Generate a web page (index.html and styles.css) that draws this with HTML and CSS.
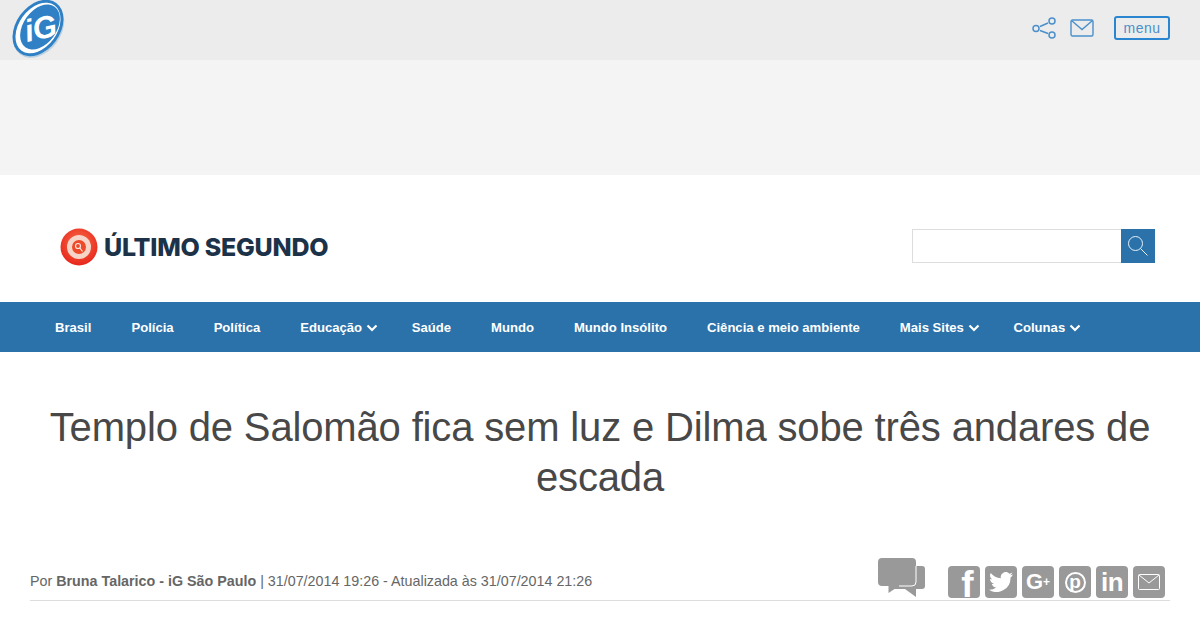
FILE: index.html
```html
<!DOCTYPE html>
<html lang="pt-BR">
<head>
  <meta charset="UTF-8">
  <title>Templo de Salomão fica sem luz e Dilma sobe três andares de escada</title>
  <link rel="stylesheet" href="styles.css">
</head>
<body>

  <div class="topbar">
    <svg class="ig-logo" width="60" height="60" viewBox="0 0 60 60">
      <ellipse cx="28.500" cy="29.500" rx="22.500" ry="31" transform="rotate(36 28.500 29.500)" fill="#bcd0e0"/>
      <ellipse cx="28" cy="28" rx="22" ry="31" transform="rotate(36 28 28)" fill="#2f80c4"/>
      <ellipse cx="28" cy="28" rx="19" ry="28" transform="rotate(36 28 28)" fill="#fff"/>
      <ellipse cx="30" cy="27" rx="16.500" ry="25" transform="rotate(36 30 27)" fill="#2f80c4"/>
      <text class="ig-text" x="17" y="42" transform="rotate(-12 17 42)">iG</text>
    </svg>
    <div class="top-actions">
      <svg width="24" height="22" viewBox="0 0 24 22" fill="none" stroke="#4b90cb" stroke-width="1.500">
        <circle cx="4" cy="11.500" r="3"/>
        <circle cx="20" cy="4" r="3"/>
        <circle cx="20" cy="18" r="3"/>
        <path d="M8 9.500l8-3.500M8 13.500l8 3"/>
      </svg>
      <svg class="top-mail" width="24" height="18" viewBox="0 0 24 18" fill="none" stroke="#4b90cb" stroke-width="1.400">
        <rect x="1" y="1" width="22" height="16" rx="1.500"/>
        <path d="M1.500 1.500L12 10.500 22.500 1.500"/>
      </svg>
      <span class="menu-btn">menu</span>
    </div>
  </div>

  <div class="ad-band"></div>

  <header class="site-header">
    <div class="brand">
      <svg width="38" height="38" viewBox="0 0 38 38">
        <defs>
          <radialGradient id="brandRed" cx="50%" cy="40%" r="60%">
            <stop offset="0" stop-color="#f9714a"/>
            <stop offset="1" stop-color="#e8261c"/>
          </radialGradient>
        </defs>
        <circle cx="19" cy="19" r="18.500" fill="url(#brandRed)"/>
        <circle cx="19" cy="19" r="12" fill="#f6d5c8"/>
        <circle cx="19" cy="19" r="7" fill="#ee4a2a"/>
        <circle cx="18" cy="18" r="2.500" fill="none" stroke="#fbe3dc" stroke-width="1.200"/>
        <path d="M19.500 19.500l3 4" stroke="#fbe3dc" stroke-width="1.200"/>
      </svg>
      <span class="brand-name">ÚLTIMO SEGUNDO</span>
    </div>
    <form class="search">
      <input class="search-input" type="text">
      <span class="search-btn">
        <svg width="22" height="22" viewBox="0 0 22 22" fill="none" stroke="#e6f0f7" stroke-width="1">
          <circle cx="8.500" cy="8.500" r="7"/>
          <path d="M13.500 13.500l7 7"/>
        </svg>
      </span>
    </form>
  </header>

  <nav class="main-nav">
    <a>Brasil</a>
    <a>Polícia</a>
    <a>Política</a>
    <a class="has-sub">Educação <svg class="chev" width="12" height="8" viewBox="0 0 12 8"><path d="M1.500 1.500L6 6l4.500-4.500"/></svg></a>
    <a>Saúde</a>
    <a>Mundo</a>
    <a>Mundo Insólito</a>
    <a>Ciência e meio ambiente</a>
    <a class="has-sub">Mais Sites <svg class="chev" width="12" height="8" viewBox="0 0 12 8"><path d="M1.500 1.500L6 6l4.500-4.500"/></svg></a>
    <a class="has-sub">Colunas <svg class="chev" width="12" height="8" viewBox="0 0 12 8"><path d="M1.500 1.500L6 6l4.500-4.500"/></svg></a>
  </nav>

  <main class="article">
    <h1>Templo de Salomão fica sem luz e Dilma sobe três andares de escada</h1>
    <div class="meta">
      <p class="byline">Por <strong>Bruna Talarico - iG São Paulo</strong> | 31/07/2014 19:26 - Atualizada às 31/07/2014 21:26</p>
      <svg class="comments" width="48" height="40" viewBox="0 0 48 40">
        <path d="M34 8h10a3 3 0 0 1 3 3v17a3 3 0 0 1-3 3h-6v8l-11-8H16V20h18z" fill="#999"/>
        <path d="M4 0h30a4 4 0 0 1 4 4v20a4 4 0 0 1-4 4H21L10.500 35v-7H4a4 4 0 0 1-4-4V4a4 4 0 0 1 4-4z" fill="#999"/>
        <path d="M21 28h13a4 4 0 0 0 4-4V8" fill="none" stroke="#fff" stroke-width="1"/>
      </svg>
      <div class="share">
        <span class="share-btn share-f">f</span>
        <span class="share-btn">
          <svg width="24" height="20" viewBox="0 0 24 20"><path fill="#fff" d="M24 2.400c-.9.400-1.800.700-2.800.800 1-.6 1.800-1.600 2.200-2.700-1 .6-2 1-3.100 1.200A4.900 4.900 0 0 0 11.900 6.200C7.800 6 4.200 4 1.700.9c-1.300 2.200-.7 5 1.500 6.500-.8 0-1.600-.2-2.200-.6 0 2.300 1.600 4.500 3.900 5-.7.200-1.500.2-2.200.1.600 2 2.400 3.400 4.600 3.400A9.900 9.900 0 0 1 0 17.800 14 14 0 0 0 21.500 5.400c1-.7 1.900-1.900 2.500-3z"/></svg>
        </span>
        <span class="share-btn share-g">G<sup>+</sup></span>
        <span class="share-btn"><span class="pin">p</span></span>
        <span class="share-btn share-in">in</span>
        <span class="share-btn">
          <svg width="22" height="16" viewBox="0 0 22 16" fill="none" stroke="#fff" stroke-width="1"><rect x=".5" y=".5" width="21" height="15" rx="1"/><path d="M1 1l10 8 10-8"/></svg>
        </span>
      </div>
    </div>
  </main>

</body>
</html>
```

FILE: styles.css
```css
body {
  margin: 0;
  font-family: "Liberation Sans", Arial, sans-serif;
  background: #fff;
  overflow: hidden;
}

.topbar {
  height: 60px;
  background: #ececec;
  display: flex;
  justify-content: space-between;
  align-items: center;
  padding: 0 30px 0 10px;
}

.ig-logo {
  align-self: flex-start;
  display: block;
}

.ig-text {
  font-family: "Liberation Sans", Arial, sans-serif;
  font-size: 31px;
  font-weight: bold;
  font-style: italic;
  letter-spacing: -0.5px;
  fill: #fff;
}

.top-actions {
  display: flex;
  align-items: center;
  padding-bottom: 4px;
}

.top-mail {
  margin-left: 14px;
}

.menu-btn {
  margin-left: 20px;
  width: 52px;
  height: 20px;
  border: 2px solid #2a86d0;
  border-radius: 3px;
  color: #4b90cb;
  font-size: 14px;
  letter-spacing: 0.5px;
  line-height: 20px;
  text-align: center;
}

.ad-band {
  height: 115px;
  background: #f4f4f4;
}

.site-header {
  height: 127px;
  display: flex;
  justify-content: space-between;
  align-items: center;
  padding: 16px 45px 0 60px;
  box-sizing: border-box;
}

.brand {
  display: flex;
  align-items: center;
  gap: 6px;
}

.brand-name {
  font-family: Inter, "Liberation Sans", sans-serif;
  font-size: 25px;
  font-weight: 800;
  letter-spacing: -0.25px;
  color: #1c3249;
}

.search {
  display: flex;
  margin: -2px 0 0;
}

.search-input {
  width: 209px;
  height: 34px;
  box-sizing: border-box;
  border: 1px solid #ddd;
  border-right: none;
  padding: 0 6px;
  outline: none;
}

.search-btn {
  width: 34px;
  height: 34px;
  background: #2b72aa;
  display: flex;
  align-items: center;
  justify-content: center;
}

.main-nav {
  height: 50px;
  background: #2b72aa;
  display: flex;
  align-items: center;
  padding-left: 35px;
}

.main-nav a {
  padding: 0 20px;
  color: #fff;
  font-size: 13.1px;
  font-weight: bold;
  white-space: nowrap;
}

.main-nav a.has-sub {
  padding-right: 14px;
}

.chev {
  margin-left: 0;
  fill: none;
  stroke: #fff;
  stroke-width: 2.200;
}

.article {
  padding: 0 30px;
}

h1 {
  margin: 50px 0 0;
  height: 156px;
  color: #484848;
  font-size: 40px;
  font-weight: normal;
  letter-spacing: -0.15px;
  line-height: 50px;
  text-align: center;
}

.meta {
  height: 42px;
  position: relative;
  display: flex;
  align-items: flex-end;
  border-bottom: 1px solid #ddd;
}

.byline {
  margin: 0 0 10px;
  color: #666;
  font-size: 14.3px;
  line-height: 18px;
}

.comments {
  position: absolute;
  left: 848px;
  top: 0;
}

.share {
  margin-left: auto;
  margin-right: 5px;
  margin-bottom: 2px;
  display: flex;
  gap: 5px;
}

.share-btn {
  width: 32px;
  height: 32px;
  background: #999;
  border-radius: 4px;
  color: #fff;
  font-weight: bold;
  display: flex;
  align-items: center;
  justify-content: center;
}

.share-f {
  font-size: 37px;
  line-height: 26px;
  align-items: flex-end;
  padding-left: 7px;
  box-sizing: border-box;
}

.share-g {
  font-size: 22px;
}

.share-g sup {
  font-size: 12px;
  line-height: 0;
}

.pin {
  width: 21px;
  height: 21px;
  box-sizing: border-box;
  border: 2px solid #fff;
  border-radius: 50%;
  font-size: 19px;
  line-height: 15px;
  text-align: center;
}

.share-in {
  font-size: 26px;
  letter-spacing: -0.5px;
}
```
